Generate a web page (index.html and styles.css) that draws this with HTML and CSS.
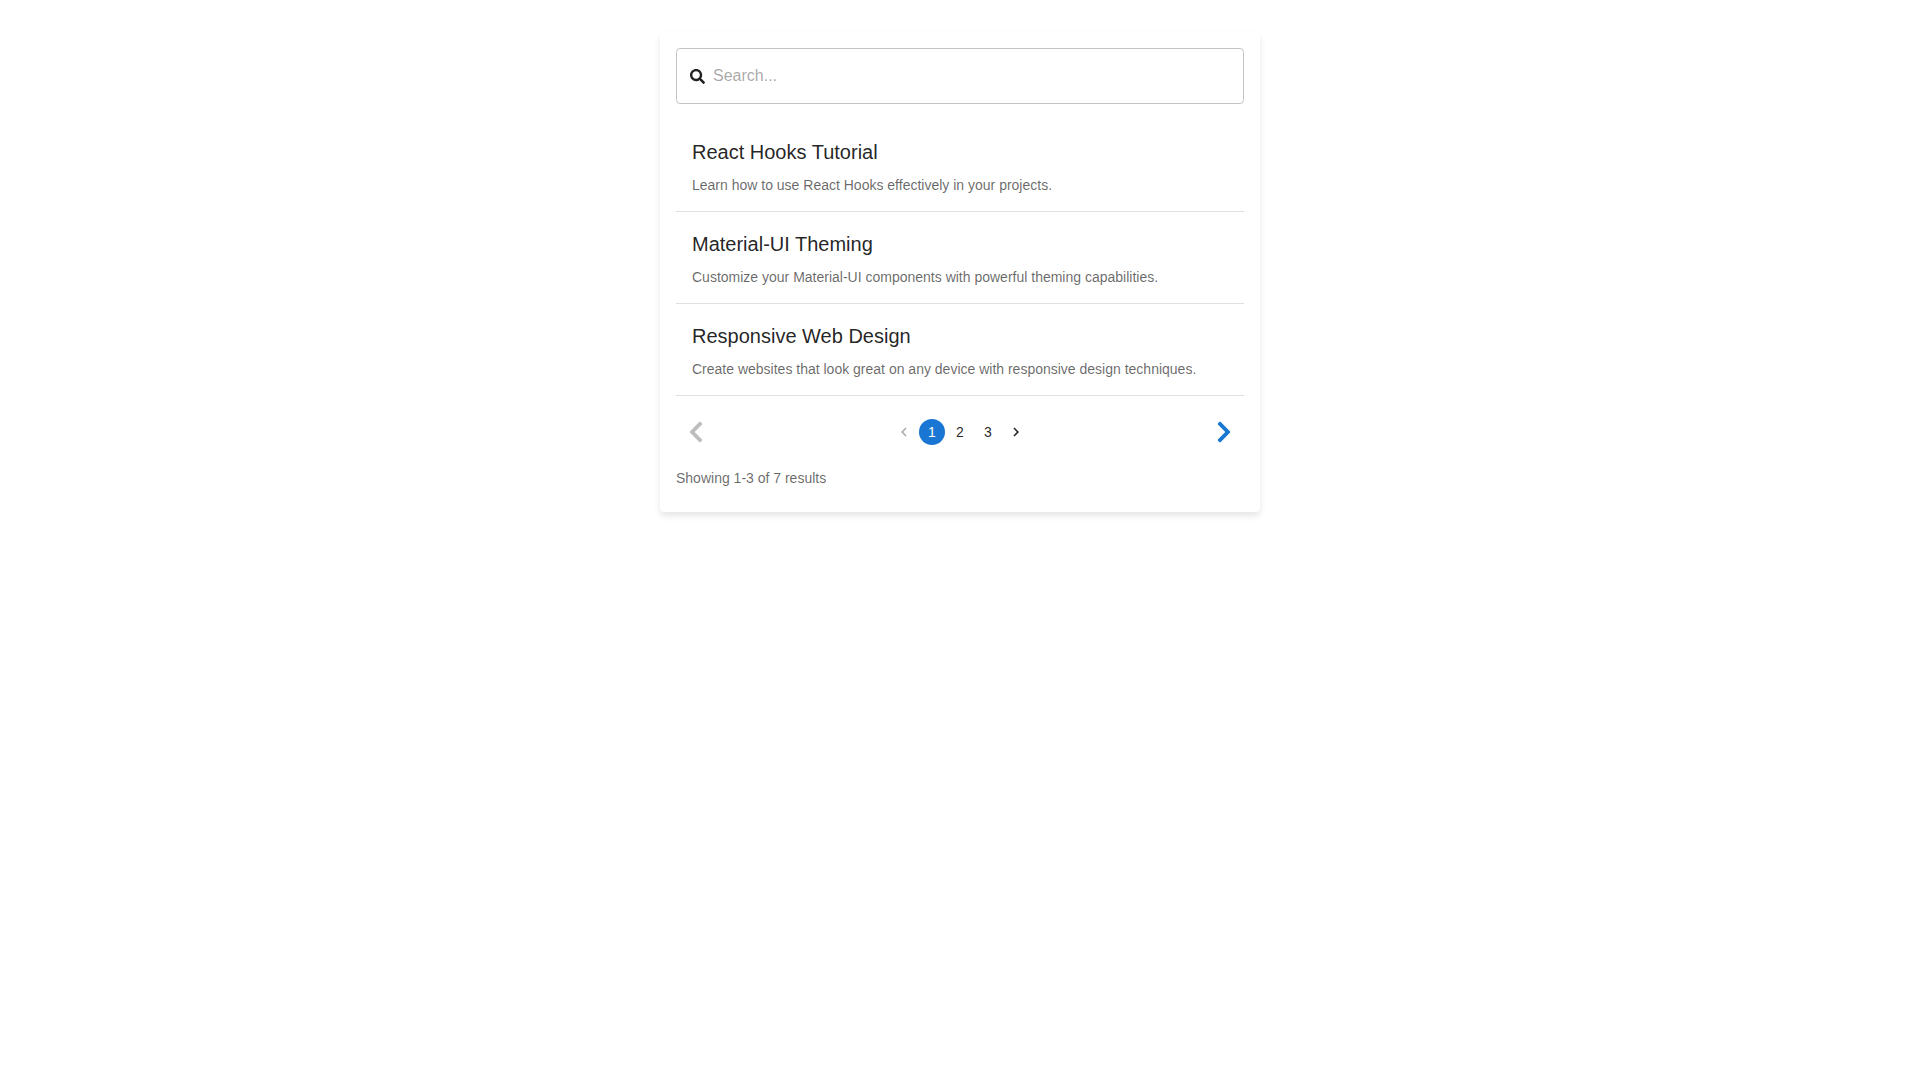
FILE: index.html
```html
<!DOCTYPE html>
<html lang="en">
<head>
  <meta charset="UTF-8" />
  <meta name="viewport" content="width=device-width, initial-scale=1.0"/>
  <title>Search Results</title>
  <link rel="stylesheet" href="styles.css">
</head>
<body>

  <main class="search-card">
    <label class="search-box">
      <svg class="search-icon" viewBox="0 0 512 512" aria-hidden="true"><path d="M505 442.7L405.3 343c-4.5-4.5-10.6-7-17-7H372c27.6-35.3 44-79.7 44-128C416 93.1 322.9 0 208 0S0 93.1 0 208s93.1 208 208 208c48.3 0 92.7-16.4 128-44v16.3c0 6.4 2.5 12.5 7 17l99.7 99.7c9.4 9.4 24.6 9.4 33.9 0l28.3-28.3c9.4-9.4 9.4-24.6.1-34zM208 336c-70.7 0-128-57.2-128-128 0-70.7 57.2-128 128-128 70.7 0 128 57.2 128 128 0 70.7-57.2 128-128 128z"/></svg>
      <input class="search-input" type="text" placeholder="Search..." aria-label="Search">
    </label>

    <ul class="results">
      <li class="result">
        <h2>React Hooks Tutorial</h2>
        <p>Learn how to use React Hooks effectively in your projects.</p>
      </li>
      <li class="result">
        <h2>Material-UI Theming</h2>
        <p>Customize your Material-UI components with powerful theming capabilities.</p>
      </li>
      <li class="result">
        <h2>Responsive Web Design</h2>
        <p>Create websites that look great on any device with responsive design techniques.</p>
      </li>
    </ul>

    <div class="pager">
      <button class="arrow-btn" aria-label="Previous page" disabled>
        <svg viewBox="0 0 320 512"><path d="M34.52 239.03L228.87 44.69c9.37-9.37 24.57-9.37 33.94 0l22.67 22.67c9.36 9.36 9.37 24.52.04 33.9L131.49 256l154.02 154.75c9.34 9.38 9.32 24.54-.04 33.9l-22.67 22.67c-9.37 9.37-24.57 9.37-33.94 0L34.52 272.97c-9.37-9.37-9.37-24.57 0-33.94z"/></svg>
      </button>

      <nav class="pages" aria-label="Pagination">
        <button class="page-btn" aria-label="Go to previous page" disabled>
          <svg viewBox="0 0 24 24"><path d="M15.41 7.41L14 6l-6 6 6 6 1.41-1.41L10.83 12z"/></svg>
        </button>
        <button class="page-btn active" aria-current="page">1</button>
        <button class="page-btn">2</button>
        <button class="page-btn">3</button>
        <button class="page-btn" aria-label="Go to next page">
          <svg viewBox="0 0 24 24"><path d="M10 6L8.59 7.41 13.17 12l-4.58 4.59L10 18l6-6z"/></svg>
        </button>
      </nav>

      <button class="arrow-btn" aria-label="Next page">
        <svg viewBox="0 0 320 512"><path d="M285.476 272.971L91.132 467.314c-9.373 9.373-24.569 9.373-33.941 0l-22.667-22.667c-9.357-9.357-9.375-24.522-.04-33.901L188.505 256 34.484 101.255c-9.335-9.379-9.317-24.544.04-33.901l22.667-22.667c9.373-9.373 24.569-9.373 33.941 0L285.475 239.03c9.373 9.372 9.373 24.568.001 33.941z"/></svg>
      </button>
    </div>

    <p class="summary">Showing 1-3 of 7 results</p>
  </main>

</body>
</html>
```

FILE: styles.css
```css
* { box-sizing: border-box; margin: 0; padding: 0; }
body {
  font-family: "Liberation Sans", Arial, sans-serif;
  font-size: 14px; line-height: 20px;
  background: #fff; color: rgba(0,0,0,0.87);
}
button { font: inherit; color: inherit; background: none; border: none; cursor: pointer; }
button:disabled { cursor: default; }
svg { display: block; fill: currentColor; }

.search-card {
  max-width: 600px; margin: 32px auto; padding: 16px 16px 24px;
  background: #fff; border-radius: 4px;
  box-shadow: 0 4px 6px rgba(0,0,0,0.1);
}

.search-box {
  display: flex; align-items: center; gap: 8px;
  padding: 15px 13px; margin-bottom: 16px;
  border: 1px solid rgba(0,0,0,0.23); border-radius: 4px;
}
.search-box:focus-within { border-color: #1976d2; }
.search-icon { width: 15px; height: 15px; flex: none; }
.search-input {
  flex: 1; min-width: 0; height: 24px; border: none; outline: none; background: none;
  font-family: inherit; font-size: 16px; color: inherit;
}
.search-input::placeholder { color: rgba(0,0,0,0.36); }

.results { list-style: none; }
.result { padding: 16px; border-bottom: 1px solid rgba(0,0,0,0.12); }
.result h2 { font-size: 20px; line-height: 32px; font-weight: 400; margin-bottom: 7px; }
.result p, .summary { color: rgba(0,0,0,0.6); }

.pager {
  display: flex; justify-content: space-between; align-items: center;
  margin: 16px 0;
}
.arrow-btn { padding: 8px; border-radius: 50%; color: #1976d2; }
.arrow-btn svg { width: 24px; height: 24px; }
.arrow-btn:disabled { color: rgba(0,0,0,0.26); }

.pages { display: flex; gap: 2px; }
.page-btn {
  display: flex; align-items: center; justify-content: center;
  width: 26px; height: 26px; border-radius: 50%;
}
.page-btn svg { width: 18px; height: 18px; }
.page-btn:disabled { opacity: 0.38; }
.page-btn.active { background: #1976d2; color: #fff; }
```
